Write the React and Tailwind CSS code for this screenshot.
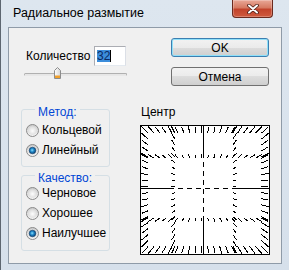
import React from 'react';

// preview grid: dashes pointing to the centre, like the radial blur preview
const C = 63.5;
const COLS = [1.5, 31.5, 96.5, 128.5];
const ROWS = [1.5, 29.5, 96.5, 128.5];
const K = 0.11;

const buildDashes = () => {
  const segs = [];
  const steps = 19;
  for (let i = 0; i <= steps; i++) {
    const t = 1.5 + (127 * i) / steps;
    COLS.forEach((x) => segs.push([x, t]));
    ROWS.forEach((y) => segs.push([t, y]));
  }
  return segs.map(([x, y]) => [x, y, x + (C - x) * K, y + (C - y) * K]);
};

const dashes = buildDashes();

const Preview = () => (
  <svg width="130" height="130" viewBox="0 0 130 130" className="block bg-white" shapeRendering="crispEdges">
    <rect x="0.5" y="0.5" width="129" height="129" fill="white" stroke="black" />
    {dashes.map(([x1, y1, x2, y2], i) => (
      <line key={i} x1={x1} y1={y1} x2={x2} y2={y2} stroke="black" strokeWidth="1" />
    ))}
    <line x1={C} y1="1" x2={C} y2="28" stroke="black" />
    <line x1={C} y1="28" x2={C} y2="91" stroke="black" strokeDasharray="5 4" />
    <line x1={C} y1="91" x2={C} y2="129" stroke="black" />
    <line x1="1" y1={C} x2="29" y2={C} stroke="black" />
    <line x1="29" y1={C} x2="94" y2={C} stroke="black" strokeDasharray="5 4" />
    <line x1="94" y1={C} x2="129" y2={C} stroke="black" />
  </svg>
);

const Radio = ({ checked }) => (
  <svg width="13" height="13" viewBox="0 0 13 13" className="shrink-0">
    <defs>
      <linearGradient id="rb-ring" x1="0" y1="0" x2="0" y2="1">
        <stop offset="0" stopColor="#c9c9c9" />
        <stop offset="1" stopColor="#f7f7f7" />
      </linearGradient>
      <radialGradient id="rb-in" cx="0.5" cy="0.55" r="0.6">
        <stop offset="0" stopColor="#fdfdfd" />
        <stop offset="1" stopColor="#d6d6d6" />
      </radialGradient>
      <radialGradient id="rb-dot" cx="0.45" cy="0.45" r="0.6">
        <stop offset="0" stopColor="#8ae0fb" />
        <stop offset="0.45" stopColor="#1f86c8" />
        <stop offset="1" stopColor="#093a68" />
      </radialGradient>
    </defs>
    <circle cx="6.5" cy="6.5" r="6" fill="url(#rb-ring)" stroke="#8a8a8a" />
    <circle cx="6.5" cy="6.5" r="4.3" fill="url(#rb-in)" />
    {checked && <circle cx="6.5" cy="6.5" r="3.3" fill="url(#rb-dot)" stroke="#12416e" strokeWidth="0.6" />}
  </svg>
);

const RadioRow = ({ label, checked }) => (
  <div className="h-[20px] flex items-center gap-[3px]">
    <Radio checked={checked} />
    <span className="leading-[14px]">{label}</span>
  </div>
);

const Group = ({ title, items, className, bodyClass }) => (
  <fieldset className={`ml-[12px] w-[89px] border border-[#d5dfe5] rounded-[3px] ${className}`}>
    <legend className="ml-[13px] px-[3px] pt-[6px] leading-[7px] text-[#0046d5]">{title}</legend>
    <div className={`pl-[4px] ${bodyClass}`}>
      {items.map((it) => (
        <RadioRow key={it.label} label={it.label} checked={it.checked} />
      ))}
    </div>
  </fieldset>
);

const btnBase =
  'w-[98px] h-[19px] rounded-[3px] border bg-[linear-gradient(#f2f2f2,#ebebeb_50%,#dddddd_50%,#cfcfcf)] text-[12px] leading-[14px] text-black flex items-center justify-center';

const Thumb = () => (
  <svg width="7" height="12" viewBox="0 0 7 12" className="absolute top-0 left-[30px]">
    <defs>
      <linearGradient id="th-fill" x1="0" y1="0" x2="1" y2="0">
        <stop offset="0" stopColor="#ffffff" />
        <stop offset="1" stopColor="#d4d4d4" />
      </linearGradient>
    </defs>
    <path d="M3.5 0.5 L6.5 3.5 L6.5 11.5 L0.5 11.5 L0.5 3.5 Z" fill="url(#th-fill)" stroke="#8c8c8c" />
    <rect x="1" y="8.5" width="5" height="2.5" fill="#f0a02c" />
  </svg>
);

export default function App() {
  return (
    <div className="w-[289px] h-[270px] overflow-hidden bg-[linear-gradient(#dde6ef,#d6e0eb)] border-l border-[#5d6670] flex flex-col font-['Liberation_Sans',Arial,sans-serif] text-[12px] text-black">
      {/* title bar */}
      <div className="h-[27px] shrink-0 flex items-start">
        <span className="pl-[12px] pt-[5px] text-[12.5px] leading-[16px]">Радиальное размытие</span>
        <div className="ml-auto mr-[16px] w-[41px] h-[18px] rounded-b-[4px] border border-t-0 border-[#6b2a1e] bg-[linear-gradient(#e9a897,#d67a62_45%,#c2432b_55%,#cf5a3e)] shadow-[inset_0_0_0_1px_rgba(255,255,255,0.25)] flex items-center justify-center">
          <svg width="12" height="10" viewBox="0 0 12 10">
            <path d="M2 1.5 L10 8.5 M10 1.5 L2 8.5" stroke="#4b1c14" strokeWidth="3.6" strokeLinecap="round" />
            <path d="M2 1.5 L10 8.5 M10 1.5 L2 8.5" stroke="#ffffff" strokeWidth="2" strokeLinecap="round" />
          </svg>
        </div>
      </div>

      {/* client area */}
      <div className="ml-[7px] w-[274px] h-[237px] shrink-0 border border-[#8f9ba8] bg-[#f0f0f0] flex">
        <div className="w-[131px] shrink-0 flex flex-col">
          <div className="mt-[18px] h-[20px] flex items-center pl-[17px]">
            <span className="w-[68px] leading-[14px]">Количество</span>
            <div className="w-[32px] h-[20px] border border-[#abadb3] border-r-[#dbdfe6] border-b-[#e3e9ef] bg-white flex items-center pl-[2px]">
              <span className="h-[12px] leading-[12px] bg-[#3b8ddb] text-[#0b2a63] text-[12px]">32</span>
              <span className="w-px h-[12px] bg-black" />
            </div>
          </div>
          <div className="relative mt-[1px] ml-[15px] w-[103px] h-[12px] pt-[6px]">
            <div className="h-[3px] rounded-full border border-[#b0b0b0] border-b-[#e8e8e8] bg-[#e6e6e6]" />
            <Thumb />
          </div>
          <Group
            title="Метод:"
            className="mt-[24px]"
            bodyClass="mt-[4px] pb-[6px]"
            items={[
              { label: 'Кольцевой' },
              { label: 'Линейный', checked: true },
            ]}
          />
          <Group
            title="Качество:"
            className="mt-[2px]"
            bodyClass="mt-[1px] pb-[7px]"
            items={[
              { label: 'Черновое' },
              { label: 'Хорошее' },
              { label: 'Наилучшее', checked: true },
            ]}
          />
        </div>

        <div className="flex flex-col">
          <button className={`${btnBase} mt-[10px] ml-[31px] border-[#3c7fb1] shadow-[inset_0_0_0_1px_#8fe0f9]`}>OK</button>
          <button className={`${btnBase} mt-[10px] ml-[31px] border-[#707070]`}>Отмена</button>
          <span className="mt-[19px] pl-[1px] leading-[14px]">Центр</span>
          <div className="mt-[6px]">
            <Preview />
          </div>
        </div>
      </div>
    </div>
  );
}
